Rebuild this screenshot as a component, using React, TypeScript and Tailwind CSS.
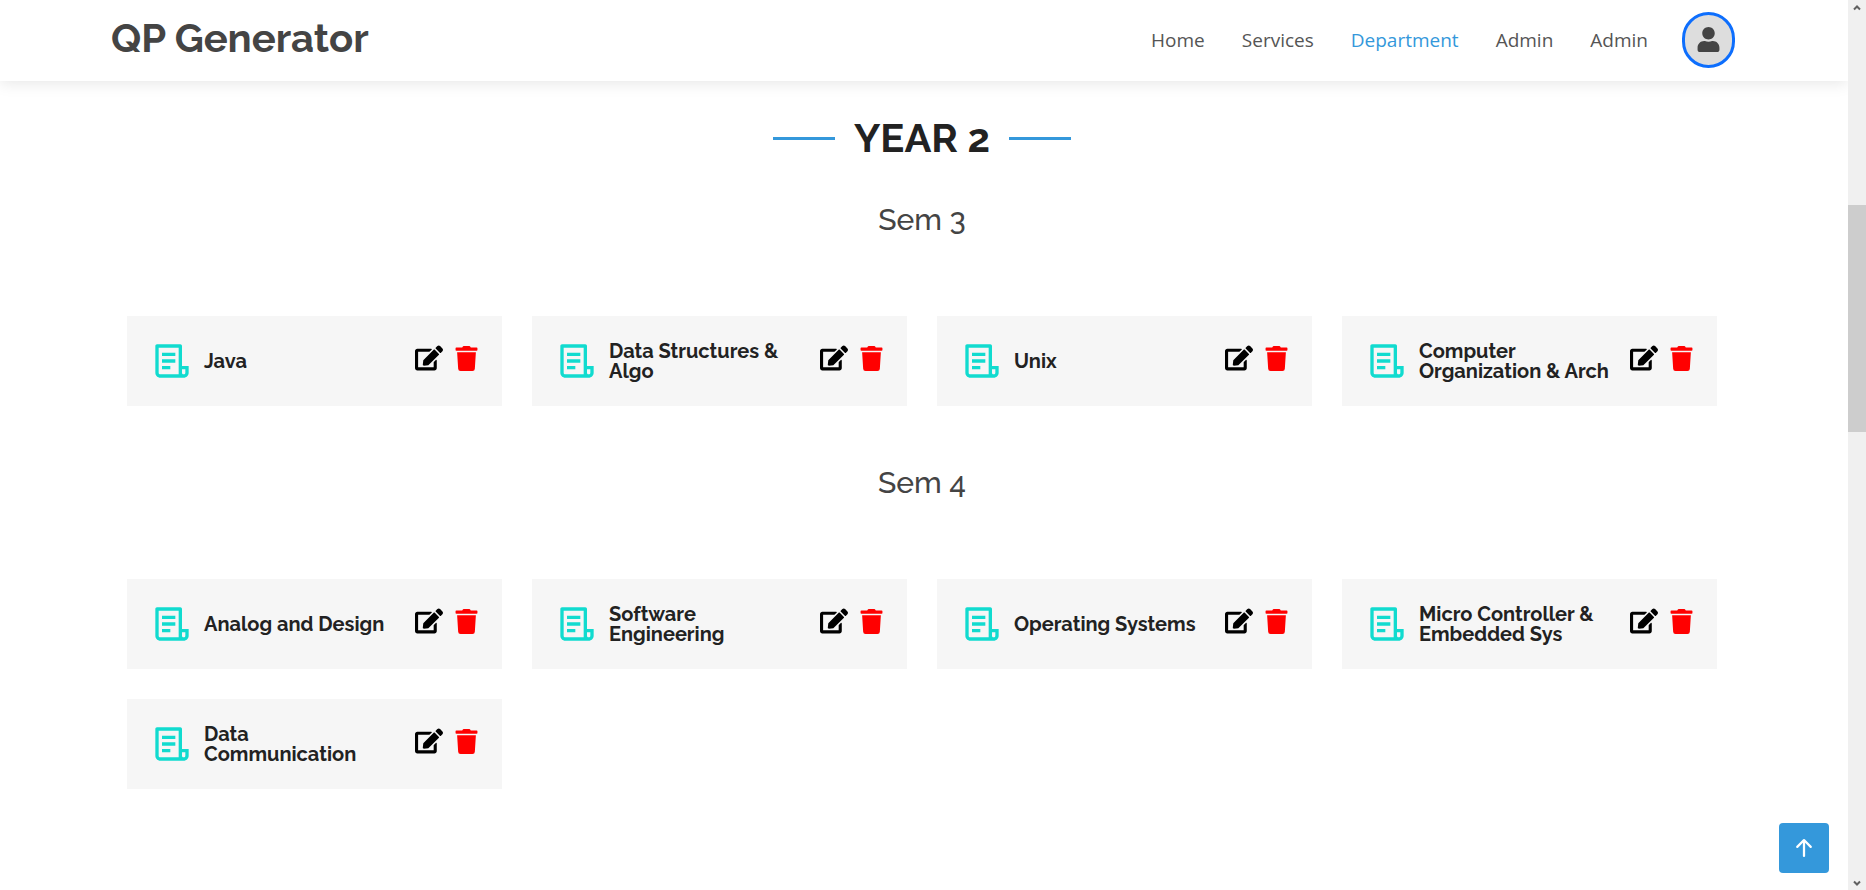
import { FaEdit, FaTrash, FaUser } from "react-icons/fa";
import { RiFileList3Line } from "react-icons/ri";
import { BsArrowUpShort } from "react-icons/bs";

const semesters = [
  {
    title: "Sem 3",
    subjects: ["Java", "Data Structures & Algo", "Unix", "Computer Organization & Arch"],
  },
  {
    title: "Sem 4",
    subjects: [
      "Analog and Design",
      "Software Engineering",
      "Operating Systems",
      "Micro Controller & Embedded Sys",
      "Data Communication",
    ],
  },
];

const links = ["Home", "Services", "Department", "Admin", "Admin"];

function Header() {
  return (
    <header className="flex h-[81px] shrink-0 items-center justify-between bg-white pr-[113px] pb-[2px] pl-[111px] shadow-[0_2px_15px_rgba(0,0,0,0.1)]">
      <a href="#home" className="pb-[3px] font-[Raleway,Lato,sans-serif] text-[40px] leading-[48px] font-bold text-[#444444]">
        QP Generator
      </a>
      <nav className="flex items-center">
        <ul className="mr-[34px] flex items-center gap-[37px] text-[19px] leading-6">
          {links.map((label, i) => (
            <li key={i}>
              <a href="#" className={label === "Department" ? "text-[#3498db]" : "text-[#555555]"}>
                {label}
              </a>
            </li>
          ))}
        </ul>
        <button
          aria-label="Profile"
          className="flex h-14 w-[53px] items-center justify-center rounded-full border-3 border-[#0d6efd] bg-[#dddddd] text-[#444444]"
        >
          <FaUser size={25} />
        </button>
      </nav>
    </header>
  );
}

function SubjectCard({ name }: { name: string }) {
  return (
    <article className="flex h-[90px] items-center bg-[#f6f6f6] pr-[23px] pl-[25px]">
      <RiFileList3Line size={40} className="shrink-0 text-[#11dbcf]" />
      <h3 className="mr-3 ml-3 flex-1 text-[20px] leading-5 font-bold text-[#222222]">
        <a href="#">{name}</a>
      </h3>
      <div className="flex shrink-0 items-center gap-[11px] pb-[6px]">
        <button aria-label={`Edit ${name}`} className="text-black">
          <FaEdit size={28} />
        </button>
        <button aria-label={`Delete ${name}`} className="text-[#ff0000]">
          <FaTrash size={25} />
        </button>
      </div>
    </article>
  );
}

function Scrollbar() {
  return (
    <div aria-hidden="true" className="flex w-[18px] shrink-0 flex-col items-center bg-[#f0f0f0]">
      <svg className="mt-1 h-2 w-2" viewBox="0 0 8 8" fill="none" stroke="#606060" strokeWidth="2">
        <path d="M1 5.500L4 2.500L7 5.500" />
      </svg>
      <div className="h-[193px]" />
      <div className="h-[227px] w-full bg-[#cdcdcd]" />
      <svg className="mt-auto mb-[3px] h-2 w-2" viewBox="0 0 8 8" fill="none" stroke="#606060" strokeWidth="2">
        <path d="M1 2.500L4 5.500L7 2.500" />
      </svg>
    </div>
  );
}

export default function App() {
  return (
    <div className="flex h-screen overflow-hidden bg-white font-['Open_Sans',sans-serif] text-[#444444]">
      <div className="relative flex min-w-0 flex-1 flex-col overflow-hidden">
        <Header />
        <main className="pr-[131px] pl-[127px] font-[Raleway,Lato,sans-serif]">
          <div className="mt-[33px] flex items-center justify-center gap-[19px]">
            <span className="h-[3px] w-[62px] bg-[#3498db]" />
            <h2 className="text-[40px] leading-12 font-bold text-[#222222]">YEAR 2</h2>
            <span className="h-[3px] w-[62px] bg-[#3498db]" />
          </div>
          {semesters.map(({ title, subjects }) => (
            <section key={title} className="mt-[38px] mb-[57px]">
              <h3 className="text-center text-[30px] leading-10 font-medium">{title}</h3>
              <div className="mt-[76px] grid grid-cols-4 gap-[30px]">
                {subjects.map((name) => (
                  <SubjectCard key={name} name={name} />
                ))}
              </div>
            </section>
          ))}
        </main>
        <button
          aria-label="Back to top"
          className="absolute right-[19px] bottom-[17px] flex h-[50px] w-[50px] items-center justify-center rounded bg-[#3498db] text-white"
        >
          <BsArrowUpShort size={36} />
        </button>
      </div>
      <Scrollbar />
    </div>
  );
}
